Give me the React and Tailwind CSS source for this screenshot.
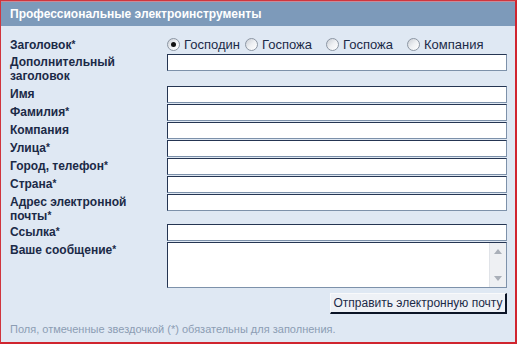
import React from "react";

const font = { fontFamily: '"Liberation Sans", Arial, sans-serif' };

function Label({ children, req }) {
  return (
    <div className="pt-[1px] text-[12px] leading-[14px] font-bold text-[#1b2a47]">
      {children}
      {req && <span className="text-[10px] align-top font-bold">*</span>}
    </div>
  );
}

function Input() {
  return (
    <div className="h-[17px] w-[340px] bg-white border border-[#7d91aa] border-t-[#253552] border-l-[#253552]" />
  );
}

function Radio({ checked, children, w }) {
  return (
    <span className={"flex items-center gap-[4px] " + w}>
      <span className="w-[13px] h-[13px] rounded-full border border-[#8c96a3] bg-gradient-to-br from-[#c9ced5] via-[#eef0f3] to-white flex items-center justify-center">
        {checked && <span className="w-[5px] h-[5px] rounded-full bg-[#111]" />}
      </span>
      <span className="text-[13px] leading-[14px] text-[#1b2a47] font-normal">{children}</span>
    </span>
  );
}

export default function App() {
  const rows = [
    ["Имя", false],
    ["Фамилия", true],
    ["Компания", false],
    ["Улица", true],
    ["Город, телефон", true],
    ["Страна", true],
  ];
  return (
    <div style={font} className="w-[517px] h-[344px] bg-[#dfe8f3] border-t border-t-[#d0353d] border-l border-l-[#d0353d] border-r-2 border-r-[#d0252f] border-b-2 border-b-[#d0252f] flex flex-col">
      <div className="h-[25px] bg-[#7d9aba] border-t border-t-[#c98a98] flex items-center pl-[9px] text-white text-[12px] font-bold">
        Профессиональные электроинструменты
      </div>
      <div className="pt-[10px] pl-[9px] pr-[8px] flex flex-col gap-[1px]">
        <div className="grid grid-cols-[157px_340px] items-center h-[17px]">
          <Label req>Заголовок</Label>
          <div className="flex items-center">
            <Radio checked w="w-[78px]">Господин</Radio>
            <Radio w="w-[81px]">Госпожа</Radio>
            <Radio w="w-[81px]">Госпожа</Radio>
            <Radio w="w-[90px]">Компания</Radio>
          </div>
        </div>
        <div className="grid grid-cols-[157px_340px] items-start min-h-[31px]">
          <Label>Дополнительный<br />заголовок</Label>
          <Input />
        </div>
        {rows.map(([t, r], i) => (
          <div key={i} className="grid grid-cols-[157px_340px] items-start min-h-[17px]">
            <Label req={r}>{t}</Label>
            <Input />
          </div>
        ))}
        <div className="grid grid-cols-[157px_340px] items-start min-h-[29px]">
          <Label req>Адрес электронной<br />почты</Label>
          <Input />
        </div>
        <div className="grid grid-cols-[157px_340px] items-start min-h-[17px]">
          <Label req>Ссылка</Label>
          <Input />
        </div>
        <div className="grid grid-cols-[157px_340px] items-start">
          <Label req>Ваше сообщение</Label>
          <div className="h-[46px] w-[340px] bg-white border border-[#7d91aa] border-t-[#253552] border-l-[#253552] flex justify-end">
            <div className="w-[17px] h-full bg-[#eef0f3] border-l border-l-[#e0e3e8] flex flex-col items-center justify-between py-[6px]">
              <svg width="8" height="5" viewBox="0 0 8 5"><path d="M4 0L8 5H0Z" fill="#a9afb8" /></svg>
              <svg width="8" height="5" viewBox="0 0 8 5"><path d="M0 0H8L4 5Z" fill="#a9afb8" /></svg>
            </div>
          </div>
        </div>
        <div className="flex justify-end pt-[4px]">
          <button className="h-[21px] w-[177px] bg-[#eef1f6] border border-t-[#f8f9fb] border-l-[#f8f9fb] border-r-[#0b1426] border-b-[#0b1426] border-r-2 border-b-2 text-[12px] text-[#1b2a47] leading-[14px]">
            Отправить электронную почту
          </button>
        </div>
        <div className="pt-[6px] text-[11px] text-[#8c9db3]">
          Поля, отмеченные звездочкой (*) обязательны для заполнения.
        </div>
      </div>
    </div>
  );
}
